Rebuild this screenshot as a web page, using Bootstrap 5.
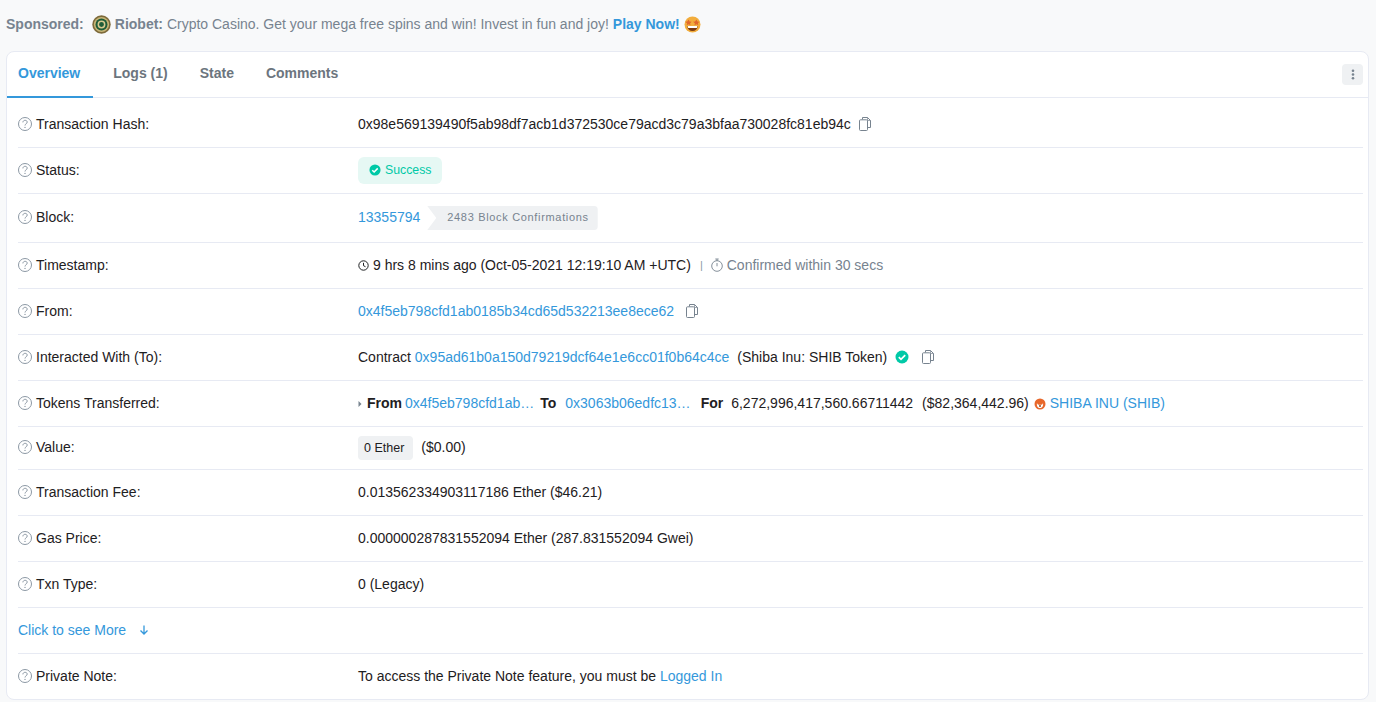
<!DOCTYPE html>
<html lang="en">
<head>
<meta charset="utf-8">
<title>Transaction</title>
<link href="https://cdn.jsdelivr.net/npm/bootstrap@5.3.0/dist/css/bootstrap.min.css" rel="stylesheet">
<style>
html,body{height:702px;overflow:hidden}
body{background:#f8f9fa;font-family:"Liberation Sans",Arial,sans-serif;font-size:14px;color:#1e2022}
a{color:#3498db;text-decoration:none}
.spons{height:49px;margin-bottom:2px;padding-left:6px;color:#77838f}
.spons b{font-weight:700}
.spons .lab{margin-right:8px}
.spons .coin{margin-right:4px}
.spons .emo{margin-left:4px}
.tx-card{margin:0 7px 0 6px;height:649px;background:#fff;border:1px solid #e7eaf3;border-radius:8px;overflow:hidden}
.tabsbar{height:46px;border-bottom:1px solid #e7eaf3;padding-right:5px}
.tabitem{height:46px;padding:0 12px 2px;margin-right:8px;font-weight:700;color:#6c757e;display:flex;align-items:center}
.tabitem:first-child{padding-left:11px;padding-right:13px}
.tabitem.on{color:#3498db;border-bottom:2px solid #3498db;margin-bottom:-1px;padding-bottom:1px;padding-top:1px}
.moreb{width:21px;height:21px;background:#eff1f3;border-radius:4px}
.rows{padding:0 5px 0 11px}
.rw{border-bottom:1px solid #e7eaf3}
.rw:last-child{border-bottom:0;padding-bottom:1px}
.h49{height:50px;padding-top:3px}.h46{height:46px}.h49b{height:49px;padding-bottom:1px}.h43{height:43px;padding-bottom:1px}
.lbl{width:340px;flex:none;gap:4px}
.ic{flex:none}
.lbl .ic,.rw>.ic,.okbadge .ic{margin-bottom:1px}
.grey{color:#77838f}
.okbadge{height:27px;width:84px;background:#e6f8f4;color:#00c9a7;border-radius:6px;font-size:12.3px;padding-left:11px;gap:4px}
.conf{height:24px;background:#eff1f3;color:#77838f;font-size:11px;letter-spacing:.67px;border-radius:0 4px 4px 0;padding:0 9px 1px 20px;margin-left:7px;margin-top:1px;clip-path:polygon(0 0,100% 0,100% 100%,0 100%,9px 50%)}
.etherb{height:24px;background:#eff1f3;border-radius:4px;font-size:12.5px;padding:0 9px 0 6px;margin-right:8px;margin-top:1px}
.sep{color:#8c98a4;margin:0 8px 0 9px;font-size:11px}
.tok b{font-weight:700;color:#1e2022}
.g3{margin-left:3px}.g4{margin-left:4px}.g5{margin-left:5px}.g6{margin-left:6px}.g8{margin-left:8px}.g9{margin-left:9px}.g10{margin-left:10px}.g12{margin-left:12px}.g13{margin-left:13px}
</style>
</head>
<body>
<svg width="0" height="0" class="position-absolute">
<defs>
<symbol id="q" viewBox="0 0 14 14"><circle cx="7" cy="7" r="6.500" fill="none" stroke="#8c98a4" stroke-width="1"/><path d="M4.900 5.400c0-1.300 1-2.100 2.200-2.100 1.200 0 2.100.8 2.100 1.800 0 1.700-2.200 1.700-2.200 3.400" fill="none" stroke="#8c98a4" stroke-width="1"/><circle cx="7" cy="10.400" r=".7" fill="#8c98a4"/></symbol>
<symbol id="cp" viewBox="0 0 12 14"><path d="M3.500 2.500V.5H8.500L11.500 3.500V10.500H8.500" fill="none" stroke="#77838f" stroke-width="1"/><path d="M8.500.5V3.500H11.500" fill="none" stroke="#77838f" stroke-width=".7"/><rect x=".5" y="2.800" width="8" height="10.700" rx="1" fill="#fff" stroke="#77838f" stroke-width="1"/></symbol>
<symbol id="ok" viewBox="0 0 14 14"><circle cx="7" cy="7" r="6.500" fill="#00c9a7"/><path d="M3.800 7.200l2.200 2.200 4.200-4.300" fill="none" stroke="#fff" stroke-width="1.700"/></symbol>
</defs>
</svg>

<div class="spons d-flex align-items-center">
<b class="lab">Sponsored:</b>
<svg class="coin" width="19" height="19" viewBox="0 0 19 19"><circle cx="9.500" cy="9.500" r="9.200" fill="#7d6a3a"/><circle cx="9.500" cy="9.500" r="7.600" fill="#c9b678"/><circle cx="9.500" cy="9.500" r="6" fill="#1f5c38"/><circle cx="9.500" cy="9.500" r="3.200" fill="none" stroke="#d8c98f" stroke-width="1.500"/></svg>
<span class="text-nowrap"><b>Riobet:</b> Crypto Casino. Get your mega free spins and win! Invest in fun and joy! <a href="#"><b>Play Now!</b></a></span>
<svg class="emo" width="17" height="17" viewBox="0 0 17 17"><circle cx="8.500" cy="8.500" r="8" fill="#f2ad3c"/><path d="M4.600 3.600l1 1.900 2 .3-1.500 1.400.4 2.100-1.900-1-1.900 1 .4-2.100L1.200 5.800l2.100-.3z" fill="#e0672c"/><path d="M12.400 3.600l1 1.900 2 .3-1.500 1.400.4 2.100-1.900-1-1.900 1 .4-2.100L9 5.800l2.100-.3z" fill="#e0672c"/><path d="M3.200 10h10.600c-.4 3.200-2.600 5-5.300 5s-4.900-1.800-5.300-5z" fill="#7a3a10"/><path d="M3.600 10h9.800l-.5 2h-8.800z" fill="#fff"/></svg>
</div>

<div class="tx-card">
<div class="tabsbar d-flex justify-content-between align-items-center">
<div class="d-flex">
<a class="tabitem on" href="#">Overview</a>
<a class="tabitem" href="#">Logs (1)</a>
<a class="tabitem" href="#">State</a>
<a class="tabitem" href="#">Comments</a>
</div>
<div class="moreb d-flex align-items-center justify-content-center">
<svg width="4" height="11" viewBox="0 0 4 11"><circle cx="2" cy="1.700" r="1.300" fill="#77838f"/><circle cx="2" cy="5.500" r="1.300" fill="#77838f"/><circle cx="2" cy="9.300" r="1.300" fill="#77838f"/></svg>
</div>
</div>

<div class="rows">
<div class="rw h49 d-flex align-items-center">
<div class="lbl d-flex align-items-center"><svg class="ic" width="14" height="14"><use href="#q"/></svg><span>Transaction Hash:</span></div>
<span>0x98e569139490f5ab98df7acb1d372530ce79acd3c79a3bfaa730028fc81eb94c</span>
<svg class="ic g8" width="12" height="14"><use href="#cp"/></svg>
</div>
<div class="rw h46 d-flex align-items-center">
<div class="lbl d-flex align-items-center"><svg class="ic" width="14" height="14"><use href="#q"/></svg><span>Status:</span></div>
<span class="okbadge d-flex align-items-center"><svg class="ic" width="12" height="12"><use href="#ok"/></svg>Success</span>
</div>
<div class="rw h49b d-flex align-items-center">
<div class="lbl d-flex align-items-center"><svg class="ic" width="14" height="14"><use href="#q"/></svg><span>Block:</span></div>
<a href="#">13355794</a>
<span class="conf d-flex align-items-center">2483 Block Confirmations</span>
</div>
<div class="rw h46 d-flex align-items-center">
<div class="lbl d-flex align-items-center"><svg class="ic" width="14" height="14"><use href="#q"/></svg><span>Timestamp:</span></div>
<svg class="ic me-1" width="11" height="11" viewBox="0 0 11 11"><circle cx="5.500" cy="5.500" r="4.700" fill="none" stroke="#1e2022" stroke-width="1"/><path d="M5.500 2.800V5.700L7.500 6.700" fill="none" stroke="#1e2022" stroke-width="1"/></svg>
<span>9 hrs 8 mins ago (Oct-05-2021 12:19:10 AM +UTC)</span>
<span class="sep">|</span>
<svg class="ic me-1" width="12" height="14" viewBox="0 0 12 14"><circle cx="6" cy="8" r="5.300" fill="none" stroke="#77838f" stroke-width=".9"/><path d="M4.300 1h3.400M6 1v2M6 5v3.300" fill="none" stroke="#77838f" stroke-width=".9"/></svg>
<span class="grey">Confirmed within 30 secs</span>
</div>
<div class="rw h46 d-flex align-items-center">
<div class="lbl d-flex align-items-center"><svg class="ic" width="14" height="14"><use href="#q"/></svg><span>From:</span></div>
<a href="#">0x4f5eb798cfd1ab0185b34cd65d532213ee8ece62</a>
<svg class="ic g12" width="12" height="14"><use href="#cp"/></svg>
</div>
<div class="rw h46 d-flex align-items-center">
<div class="lbl d-flex align-items-center"><svg class="ic" width="14" height="14"><use href="#q"/></svg><span>Interacted With (To):</span></div>
<span>Contract&nbsp;</span><a href="#">0x95ad61b0a150d79219dcf64e1e6cc01f0b64c4ce</a>
<span class="g8">(Shiba Inu: SHIB Token)</span>
<svg class="ic g8" width="14" height="14"><use href="#ok"/></svg>
<svg class="ic g13" width="12" height="14"><use href="#cp"/></svg>
</div>
<div class="rw h46 d-flex align-items-center">
<div class="lbl d-flex align-items-center"><svg class="ic" width="14" height="14"><use href="#q"/></svg><span>Tokens Transferred:</span></div>
<div class="tok d-flex align-items-center text-nowrap">
<svg class="ic me-1" width="5" height="8" viewBox="0 0 5 8"><path d="M.5 1l3 3-3 3z" fill="#77838f"/></svg>
<b>From</b><a class="g3" href="#">0x4f5eb798cfd1ab…</a><b class="g6">To</b><a class="g9" href="#">0x3063b06edfc13…</a><b class="g10">For</b><span class="g8">6,272,996,417,560.66711442</span><span class="g9">($82,364,442.96)</span>
<svg class="ic g5" width="12" height="12" viewBox="0 0 12 12"><circle cx="6" cy="6" r="5.500" fill="#e8672a"/><path d="M3 5c.5 1.800 1.500 1.700 3 1.700S8.500 6.800 9 5c.6 3-1 5-3 5S2.400 8 3 5z" fill="#fff"/><circle cx="6" cy="8" r=".9" fill="#7a3a10"/></svg>
<a class="g4" href="#">SHIBA INU (SHIB)</a>
</div>
</div>
<div class="rw h43 d-flex align-items-center">
<div class="lbl d-flex align-items-center"><svg class="ic" width="14" height="14"><use href="#q"/></svg><span>Value:</span></div>
<span class="etherb d-flex align-items-center">0 Ether</span>
<span>($0.00)</span>
</div>
<div class="rw h46 d-flex align-items-center">
<div class="lbl d-flex align-items-center"><svg class="ic" width="14" height="14"><use href="#q"/></svg><span>Transaction Fee:</span></div>
<span>0.013562334903117186 Ether ($46.21)</span>
</div>
<div class="rw h46 d-flex align-items-center">
<div class="lbl d-flex align-items-center"><svg class="ic" width="14" height="14"><use href="#q"/></svg><span>Gas Price:</span></div>
<span>0.000000287831552094 Ether (287.831552094 Gwei)</span>
</div>
<div class="rw h46 d-flex align-items-center">
<div class="lbl d-flex align-items-center"><svg class="ic" width="14" height="14"><use href="#q"/></svg><span>Txn Type:</span></div>
<span>0 (Legacy)</span>
</div>
<div class="rw h46 d-flex align-items-center">
<a href="#">Click to see More</a>
<svg class="ic g12" width="12" height="12" viewBox="0 0 12 12"><path d="M6 1.500V10M2.500 6.500L6 10l3.500-3.500" fill="none" stroke="#3498db" stroke-width="1.300"/></svg>
</div>
<div class="rw h46 d-flex align-items-center">
<div class="lbl d-flex align-items-center"><svg class="ic" width="14" height="14"><use href="#q"/></svg><span>Private Note:</span></div>
<span>To access the Private Note feature, you must be <a href="#">Logged In</a></span>
</div>
</div>
</div>
<script src="https://cdn.jsdelivr.net/npm/bootstrap@5.3.0/dist/js/bootstrap.bundle.min.js"></script>
</body>
</html>
